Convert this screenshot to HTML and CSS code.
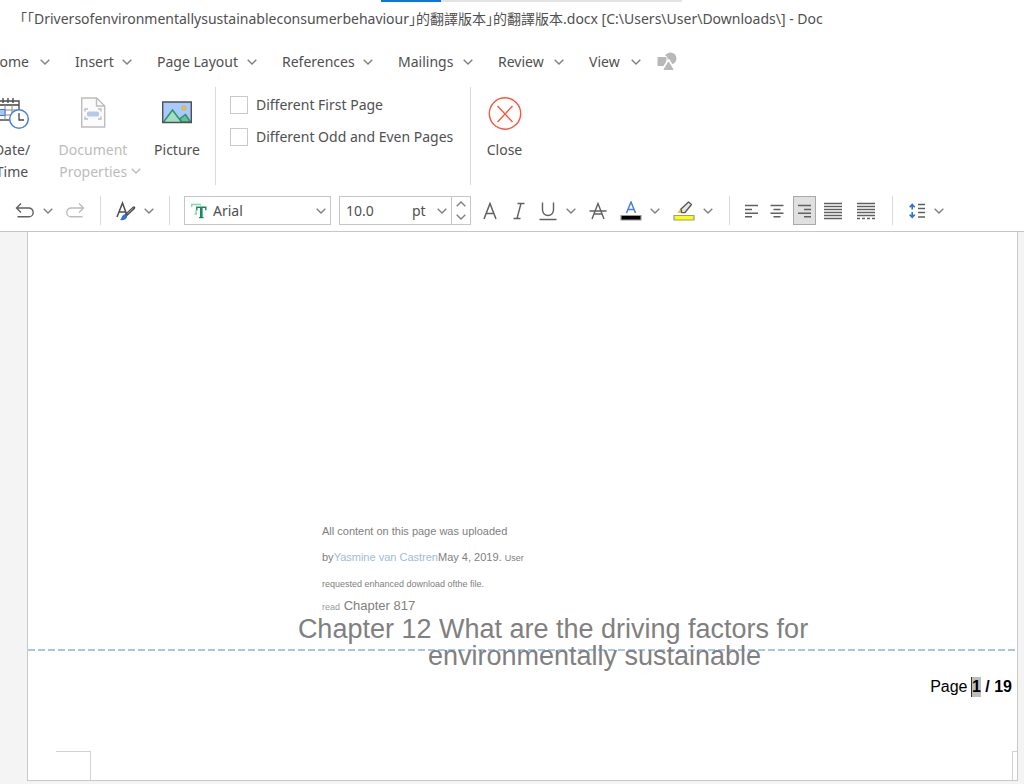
FILE: index.html
```html
<!DOCTYPE html>
<html lang="en">
<head>
<meta charset="utf-8">
<title>Document editor</title>
<link rel="stylesheet" href="styles.css">
</head>
<body>
<svg class="defs" aria-hidden="true">
  <symbol id="chev" viewBox="0 0 10 6"><path d="M.7.7 5 5 9.3.7" fill="none" stroke="currentColor" stroke-width="1.4"/></symbol>
</svg>
<div class="app">
  <header class="titlebar">
    <div class="progress"><div class="progress-done"></div></div>
    <div class="title">「「Driversofenvironmentallysustainableconsumerbehaviour」的翻譯版本」的翻譯版本.docx [C:\Users\User\Downloads\] - Doc</div>
  </header>

  <nav class="menu">
    <button class="menu-item menu-first">Home<svg class="chev"><use href="#chev"/></svg></button>
    <button class="menu-item">Insert<svg class="chev"><use href="#chev"/></svg></button>
    <button class="menu-item">Page Layout<svg class="chev"><use href="#chev"/></svg></button>
    <button class="menu-item">References<svg class="chev"><use href="#chev"/></svg></button>
    <button class="menu-item">Mailings<svg class="chev"><use href="#chev"/></svg></button>
    <button class="menu-item">Review<svg class="chev"><use href="#chev"/></svg></button>
    <button class="menu-item">View<svg class="chev"><use href="#chev"/></svg></button>
    <button class="menu-item" aria-label="Object"><svg width="20" height="20" viewBox="0 0 20 20"><circle cx="13.500" cy="6.500" r="6" fill="#b8b8b8"/><rect x="0" y="4.500" width="10" height="10" rx="1" fill="#b8b8b8" stroke="#fff" stroke-width="1"/><path d="M11.500 8.500 17 18H6z" fill="#b8b8b8" stroke="#fff" stroke-width="3" stroke-linejoin="round"/><path d="M11.500 10 16 17.500H7z" fill="#b8b8b8" stroke="#b8b8b8" stroke-linejoin="round"/></svg></button>
  </nav>

  <div class="ribbon">
    <button class="tool tool-date">
      <svg width="42" height="34" viewBox="0 0 42 34"><g fill="none" stroke="#4d4d4d"><path d="M1 4h27v19H1z" stroke-width="1.400"/><path d="M1 8h27" stroke-width="1.600"/><path d="M5 1v5M12 1v5M22 1v5M17 1v5" stroke-width="1.400"/><path d="M1 13h27M1 18h27M7 8v15M14 8v15M21 8v15" stroke="#888"/></g><path d="M6 12.500h8v6H6z" fill="#a9c6fa" stroke="#3c78d8"/><circle cx="28" cy="22" r="9.300" fill="#fff" stroke="#4a80e0" stroke-width="1.500"/><path d="M28 16v7h5" fill="none" stroke="#444" stroke-width="1.300"/></svg>
      <span>Date/<br>Time</span>
    </button>
    <button class="tool" disabled>
      <svg width="26" height="34" viewBox="0 0 26 34"><g fill="none" stroke="#bdbdbd" stroke-width="1.400"><path d="M1.700 1h15l8 8v21h-23z" fill="#fbfbfb"/><path d="M16.500 1v8h8"/><path d="M5 14.500V12h3M18 12h3v2.500M5 19.500V22h3M18 22h3v-2.500"/></g><rect x="7" y="14.500" width="12" height="5" rx="1.500" fill="#b3c9f0"/></svg>
      <span>Document<br>Properties <svg class="chev"><use href="#chev"/></svg></span>
    </button>
    <button class="tool">
      <svg width="30" height="34" viewBox="0 0 30 34"><path d="M.7 5h28.600v20.500H.7z" fill="#a9c8fb"/><path d="M1.500 25 10.500 13l9 12" fill="#a5dcc2" stroke="#27976a" stroke-width="1.500"/><path d="M18 21.500 23.500 17.500 28.500 25h-9z" fill="#6dbb97" stroke="#27976a" stroke-width="1.500"/><circle cx="22" cy="11" r="2" fill="#ffc60b" stroke="#d79a1d" stroke-width=".6"/><path d="M.7 5h28.600v20.500H.7z" fill="none" stroke="#4c5258" stroke-width="1.400"/></svg>
      <span>Picture</span>
    </button>
    <i class="rule"></i>
    <div class="checks">
      <label><input type="checkbox">Different First Page</label>
      <label><input type="checkbox">Different Odd and Even Pages</label>
    </div>
    <i class="rule"></i>
    <button class="tool">
      <svg width="34" height="34" viewBox="0 0 34 34"><g fill="none" stroke="#f8593f" stroke-width="1.400"><circle cx="17" cy="16.500" r="15.700"/><path d="m9.500 9 15 16M24.500 9l-15 16"/></g></svg>
      <span>Close</span>
    </button>
  </div>

  <div class="toolbar">
    <button aria-label="Undo"><svg width="20" height="18" viewBox="0 0 20 18" fill="none" stroke="#606060" stroke-width="1.400"><path d="M6 1.500 1.500 6 6 10.500M1.500 6h12.300a4.200 4.200 0 0 1 0 8.800H2.500"/></svg></button>
    <button aria-label="Undo list"><svg class="chev"><use href="#chev"/></svg></button>
    <button aria-label="Redo" disabled><svg width="20" height="18" viewBox="0 0 20 18" fill="none" stroke="#bcbcbc" stroke-width="1.400"><path d="M14 1.500 18.500 6 14 10.500M18.500 6H6.200a4.200 4.200 0 0 0 0 8.800h11.300"/></svg></button>
    <i class="rule"></i>
    <button aria-label="Character style"><svg width="20" height="20" viewBox="0 0 20 20"><path d="M1 16 6.500 2l4 11M3 11h7" fill="none" stroke="#4d4d4d" stroke-width="1.500"/><path d="m17.800 6.800-7.600 7" stroke="#4d4d4d" stroke-width="3" stroke-linecap="round"/><path d="m17.500 7-6 5.500" stroke="#aaa"/><path d="M8 13.500c1.800-.5 3.700 1 3 2.800C10 18.700 7 19.500 4 19c1.800-1.500 1.800-4.500 4-5.500z" fill="#2f6fe0"/></svg></button>
    <button aria-label="Style list"><svg class="chev"><use href="#chev"/></svg></button>
    <i class="rule"></i>
    <div class="field">
      <svg width="16" height="18" viewBox="0 0 16 18" fill="none"><path d="M.7 5V2.500h8.600V5M5 2.500V12M3.500 12H6" stroke="#8bd0b0" stroke-width="1.300"/><path d="M5.800 8V5.500h9V8M10.300 5v10.500" stroke="#fff" stroke-width="4"/><path d="M5.800 8.200V5.300h9v2.900M8 15.600h4.600" stroke="#17895a" stroke-width="1.400"/><path d="M10.300 5v10.500" stroke="#17895a" stroke-width="2.600"/></svg>
      <select aria-label="Font"><option>Arial</option></select>
      <svg class="chev"><use href="#chev"/></svg>
    </div>
    <div class="field size">
      <input type="text" value="10.0" aria-label="Font size">
      <select aria-label="Unit"><option>pt</option></select>
      <svg class="chev"><use href="#chev"/></svg>
      <div class="spin">
        <button aria-label="Increase"><svg class="chev up"><use href="#chev"/></svg></button>
        <button aria-label="Decrease"><svg class="chev"><use href="#chev"/></svg></button>
      </div>
    </div>
    <button aria-label="Bold"><svg width="14" height="18" viewBox="0 0 14 18" fill="none" stroke="#606060" stroke-width="1.500"><path d="M1 17 7 1.500 13 17M3 11.500h8"/></svg></button>
    <button aria-label="Italic"><svg width="12" height="18" viewBox="0 0 12 18" fill="none" stroke="#606060" stroke-width="1.400"><path d="M4.500 1.500h7M.5 16.500h7M8 1.500l-4 15"/></svg></button>
    <button aria-label="Underline"><svg width="18" height="20" viewBox="0 0 18 20" fill="none" stroke="#606060" stroke-width="1.400"><path d="M3.500 1.500V9a5.500 5.500 0 0 0 11 0V1.500M.5 18.500h17"/></svg></button>
    <button aria-label="Underline list"><svg class="chev"><use href="#chev"/></svg></button>
    <button aria-label="Strikethrough"><svg width="18" height="18" viewBox="0 0 18 18" fill="none" stroke="#606060" stroke-width="1.400"><path d="M3 17 9 1.500 15 17M5 12h8M.5 9h17"/></svg></button>
    <button aria-label="Font color"><svg width="22" height="20" viewBox="0 0 22 20"><path d="M6.500 12 11 1l4.500 11M8 8.500h6" fill="none" stroke="#477fe6" stroke-width="1.500"/><path d="M1 14.500h20v4.500H1z" fill="#000" stroke="#999" stroke-width="1.200"/></svg></button>
    <button aria-label="Font color list"><svg class="chev"><use href="#chev"/></svg></button>
    <button aria-label="Highlight"><svg width="22" height="20" viewBox="0 0 22 20"><path d="m4.500 12 3-4.500 3.500 3L8.500 12z" fill="#fdbd12"/><path d="m8 8 7.500-7 3 2.500-6.500 8-3.200.2z" fill="#e5e5e5" stroke="#555" stroke-width="1.300" stroke-linejoin="round"/><path d="M1 14.500h20v4.500H1z" fill="#ff0" stroke="#999" stroke-width="1.200"/></svg></button>
    <button aria-label="Highlight list"><svg class="chev"><use href="#chev"/></svg></button>
    <i class="rule"></i>
    <button aria-label="Align left"><svg width="14" height="14" viewBox="0 0 14 14" stroke="#606060" stroke-width="1.400"><path d="M0 1.500h13M0 5.500h7M0 9.200h13M0 12.800h7"/></svg></button>
    <button aria-label="Align center"><svg width="14" height="14" viewBox="0 0 14 14" stroke="#606060" stroke-width="1.400"><path d="M.5 1.500h13M3.500 5.500h7M.5 9.200h13M3.500 12.800h7"/></svg></button>
    <button class="active" aria-label="Align right" aria-pressed="true"><svg width="14" height="14" viewBox="0 0 14 14" stroke="#606060" stroke-width="1.400"><path d="M0 1.500h13M6 5.500h7M0 9.200h13M6 12.800h7"/></svg></button>
    <button aria-label="Justify"><svg width="18" height="18" viewBox="0 0 18 18" stroke="#606060" stroke-width="1.700"><path d="M0 1.500h18M0 4.500h18M0 7.500h18M0 10.500h18M0 13.500h18M0 16.500h18"/></svg></button>
    <button aria-label="Distribute"><svg width="18" height="18" viewBox="0 0 18 18" stroke="#606060" stroke-width="1.700"><path d="M0 1.500h18M0 4.500h18M0 7.500h18M0 10.500h18M0 13.500h18"/><path d="M0 16.500h18" stroke-dasharray="3 2"/></svg></button>
    <i class="rule"></i>
    <button aria-label="Line spacing"><svg width="16" height="16" viewBox="0 0 16 16" fill="none" stroke-width="1.400"><path d="M9 1.500h7M9 5.500h7M9 9.500h7M9 14h7" stroke="#606060"/><path d="M3.200 1.500v5M.7 4.200 3.200 1.500l2.500 2.700M3.200 9v5.300M.7 11.600l2.500 2.700 2.500-2.700" stroke="#2f6fe0" stroke-width="1.600"/></svg></button>
    <button aria-label="Line spacing list"><svg class="chev"><use href="#chev"/></svg></button>
  </div>

  <main class="workspace">
    <article class="page">
      <div class="note">
        <p>All content on this page was uploaded</p>
        <p>by<a href="#author">Yasmine van Castren</a>May 4, 2019. <small>User</small></p>
        <p><small>requested enhanced download ofthe file.</small></p>
        <p class="read"><small>read</small> Chapter 817</p>
      </div>
      <footer class="footer">
        <div class="pageno">Page <b><mark>1</mark> / 19</b></div>
        <div class="corners"><i class="corner-left"></i><i class="corner-right"></i></div>
      </footer>
      <h1>Chapter 12 What are the driving factors for<br>environmentally sustainable</h1>
    </article>
  </main>
</div>
</body>
</html>
```
FILE: styles.css
```css
* { box-sizing: border-box; }
body {
  margin: 0;
  font: 14px/22px "Noto Sans", "Noto Sans CJK TC", sans-serif;
  color: #505050;
  background: #fff;
}
button, input, select { font: inherit; color: inherit; }
button { padding: 0; border: 0; background: none; }
svg { display: block; flex: none; }
.defs { position: absolute; width: 0; height: 0; }
.chev { width: 10px; height: 6px; color: #808080; }
.app { display: flex; flex-direction: column; min-height: 100vh; overflow: hidden; }

.titlebar { height: 38px; }
.progress { width: 301px; height: 2px; margin-left: 381px; background: #e4e4e4; }
.progress-done { width: 60px; height: 2px; background: #0a78d7; }
.title { padding: 6px 0 0 20px; white-space: nowrap; font-feature-settings: "halt"; }

.menu {
  display: grid;
  grid-template-columns: 50px 57px 100px 91px 75px 66px 52px 20px;
  column-gap: 25px;
  height: 46px;
  padding-top: 1px;
  align-items: center;
}
.menu .menu-item:last-child { margin-left: -9px; }
.menu-item { display: flex; align-items: center; justify-content: space-between; white-space: nowrap; }
.menu-first { justify-content: flex-end; gap: 11px; }

.ribbon {
  display: grid;
  grid-template-columns: 32px 122px 46px 30px 225px 31px 37px;
  height: 104px;
  padding-top: 3px;
}
.ribbon .rule { height: 98px; }
.tool { display: flex; flex-direction: column; align-items: center; gap: 8px; padding-top: 10px; white-space: nowrap; text-align: center; }
.tool-date { margin-left: -8px; }
.tool:disabled { color: #bcbcbc; }
.tool .chev { display: inline-block; margin-right: -14px; vertical-align: 3px; color: inherit; }
.rule { width: 1px; background: #d9d9d9; justify-self: center; }
.checks { display: flex; flex-direction: column; gap: 10px; padding-top: 7px; }
.checks label { display: flex; align-items: center; gap: 8px; white-space: nowrap; }
.checks input { appearance: none; width: 18px; height: 18px; margin: 0; border: 1px solid #c9c9c9; background: #fff; }

.toolbar {
  display: grid;
  grid-template-columns: 29px 18px 35px 16px 35px 12px 28px 148px 140px 37px 22px 35px 12px 42px 24px 24px 34px 14px 28px 18px 32px 23px 33px 34px 18px 32px 12px;
  height: 44px;
  padding: 8px 0 6px 10px;
  border-bottom: 1px solid #c6c6c6;
}
.toolbar > button { display: grid; place-items: center; }
.toolbar > .active { background: #e0e0e0; border: 1px solid #a9a9a9; }
.field { display: flex; align-items: center; gap: 6px; margin-left: 1px; padding: 0 4px 0 6px; border: 1px solid #c6c6c6; }
.field select { appearance: none; flex: 1; min-width: 0; padding: 0; border: 0; background: none; }
.size { gap: 4px; margin-left: 8px; padding-right: 0; }
.size input { width: 62px; padding: 0; border: 0; outline: 0; background: none; }
.size .spin { display: grid; width: 19px; align-self: stretch; border-left: 1px solid #c6c6c6; }
.spin button { display: grid; place-items: center; }
.up { transform: rotate(180deg); }

.workspace { display: flex; flex: 1; padding: 0 6px 3px 27px; background: #f4f4f4; }
.page {
  position: relative;
  flex: 1;
  padding: 286px 0 100px;
  border: 1px solid #c9c9c9;
  border-top: 0;
  background: #fff;
  font-family: "Liberation Sans", Arial, sans-serif;
  color: #808080;
}
.note { margin-left: 294px; font-size: 11px; line-height: 26px; }
.note p { margin: 0; }
.note small { font-size: 9px; line-height: 1; }
.note a { color: #9dbdd6; text-decoration: none; }
.note .read { font-size: 13px; line-height: 20px; }
.read small { color: #999; }
.page h1 {
  position: relative;
  width: 585px;
  margin: 0 0 0 274px;
  font-size: 27px;
  font-weight: 400;
  line-height: 27px;
  text-align: center;
  text-indent: -83px;
  white-space: nowrap;
}
.footer {
  position: absolute;
  inset: auto 0 0;
  display: flex;
  flex-direction: column;
  justify-content: space-between;
  height: 131px;
  background: repeating-linear-gradient(90deg, #aac5e8 0 7px, #fff 7px 10px) top / 100% 2px no-repeat;
}
.pageno { padding: 28px 5px 0 0; font-size: 16px; line-height: 20px; text-align: right; color: #000; }
.pageno mark { display: inline-block; color: inherit; background: #bdbdbd; box-shadow: -1px 0 #333; }
.corners { display: flex; justify-content: space-between; height: 29px; }
.corner-left { width: 35px; margin-left: 28px; border: solid #d2d2d2; border-width: 1px 1px 0 0; }
.corner-right { width: 5px; border: solid #d2d2d2; border-width: 1px 0 0 1px; }
```
